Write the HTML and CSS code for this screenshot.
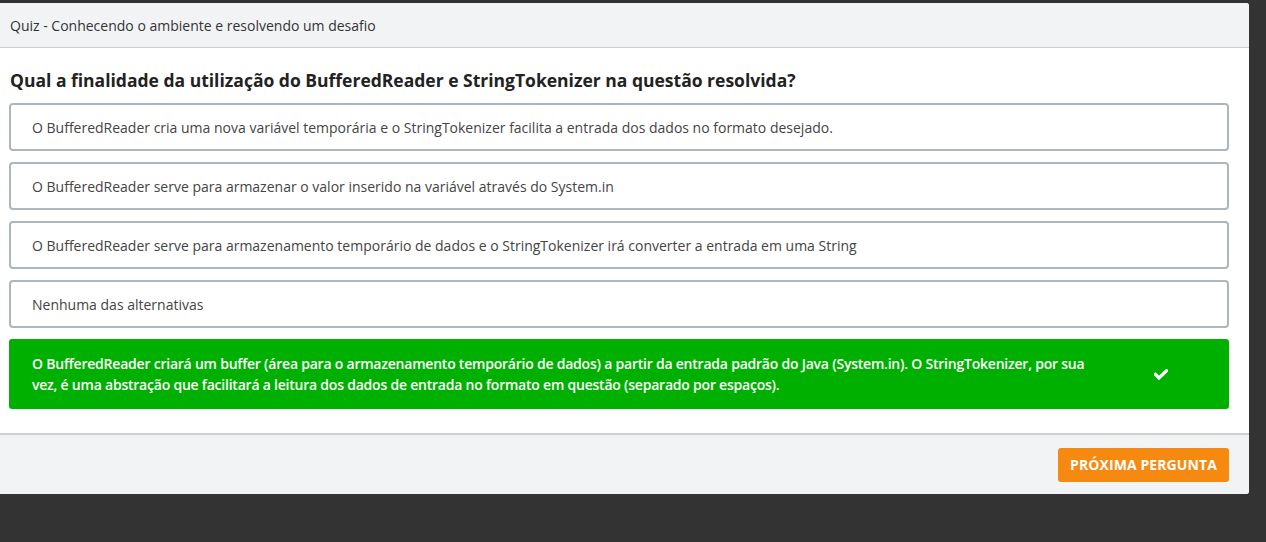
FILE: index.html
```html
<!DOCTYPE html>
<html lang="pt">
<head>
<meta charset="utf-8">
<link rel="stylesheet" href="styles.css">
</head>
<body>
<div class="modal">
  <div class="modal-header">Quiz - Conhecendo o ambiente e resolvendo um desafio</div>
  <div class="modal-body">
    <h2 class="question">Qual a finalidade da utilização do BufferedReader e StringTokenizer na questão resolvida?</h2>
    <div class="options">
      <div class="option">O BufferedReader cria uma nova variável temporária e o StringTokenizer facilita a entrada dos dados no formato desejado.</div>
      <div class="option">O BufferedReader serve para armazenar o valor inserido na variável através do System.in</div>
      <div class="option">O BufferedReader serve para armazenamento temporário de dados e o StringTokenizer irá converter a entrada em uma String</div>
      <div class="option">Nenhuma das alternativas</div>
      <div class="option correct">
        <span class="correct-text">O BufferedReader criará um buffer (área para o armazenamento temporário de dados) a partir da entrada padrão do Java (System.in). O StringTokenizer, por sua vez, é uma abstração que facilitará a leitura dos dados de entrada no formato em questão (separado por espaços).</span>
        <span class="check"><svg width="14" height="11" viewBox="0 0 14 11"><path d="M1.4 5.4 L5 9 L12.6 1.6" fill="none" stroke="#fff" stroke-width="3.2" stroke-linecap="square"/></svg></span>
      </div>
    </div>
  </div>
  <div class="modal-footer">
    <button class="btn-next">Próxima pergunta</button>
  </div>
</div>
</body>
</html>
```
FILE: styles.css
```css
html, body {
  margin: 0;
  padding: 0;
  background: #333333;
  height: 100%;
}
body {
  font-family: "Open Sans", "Noto Sans", sans-serif;
  color: #333;
  padding-top: 3px;
  box-sizing: border-box;
}
.modal {
  width: 1249px;
  background: #fff;
  border-radius: 0 3px 3px 0;
  overflow: hidden;
}
.modal-header {
  box-sizing: border-box;
  background: #f2f3f5;
  border-bottom: 1px solid #c9cdd4;
  height: 45px;
  display: flex;
  align-items: center;
  padding-left: 10px;
  font-size: 14px;
  color: #333;
}
.modal-body {
  padding: 20px 20px 24px 9px;
}
.question {
  margin: 0 0 11px 1px;
  font-size: 17.5px;
  line-height: 24px;
  font-weight: 700;
  color: #222;
}
.options {
  display: flex;
  flex-direction: column;
  gap: 11px;
}
.option {
  border: 2px solid #adb5bd;
  border-radius: 4px;
  height: 48px;
  box-sizing: border-box;
  display: flex;
  align-items: center;
  padding: 0 21px;
  font-size: 14px;
  color: #444;
}
.option.correct {
  background: #00b000;
  border-color: #00b000;
  height: 70px;
  color: #fff;
  font-weight: 600;
  line-height: 21px;
  padding: 0 0 0 21px;
  border-radius: 3px;
}
.correct-text {
  width: 1070px;
  flex: none;
  letter-spacing: -0.22px;
}
.check {
  flex: 1;
  display: flex;
  justify-content: center;
  padding-right: 8px;
}
.check svg { display: block; }
.modal-footer {
  background: #f2f3f5;
  border-top: 2px solid #cdcfd3;
  height: 61px;
  box-sizing: border-box;
  display: flex;
  justify-content: flex-end;
  align-items: center;
  padding-right: 20px;
}
.btn-next {
  background: #f68a10;
  color: #fff;
  border: none;
  border-radius: 3px;
  height: 34px;
  width: 171px;
  font-family: "Open Sans", "Noto Sans", sans-serif;
  font-weight: 700;
  font-size: 14px;
  text-transform: uppercase;
  letter-spacing: 0.1px;
  cursor: pointer;
}
```
